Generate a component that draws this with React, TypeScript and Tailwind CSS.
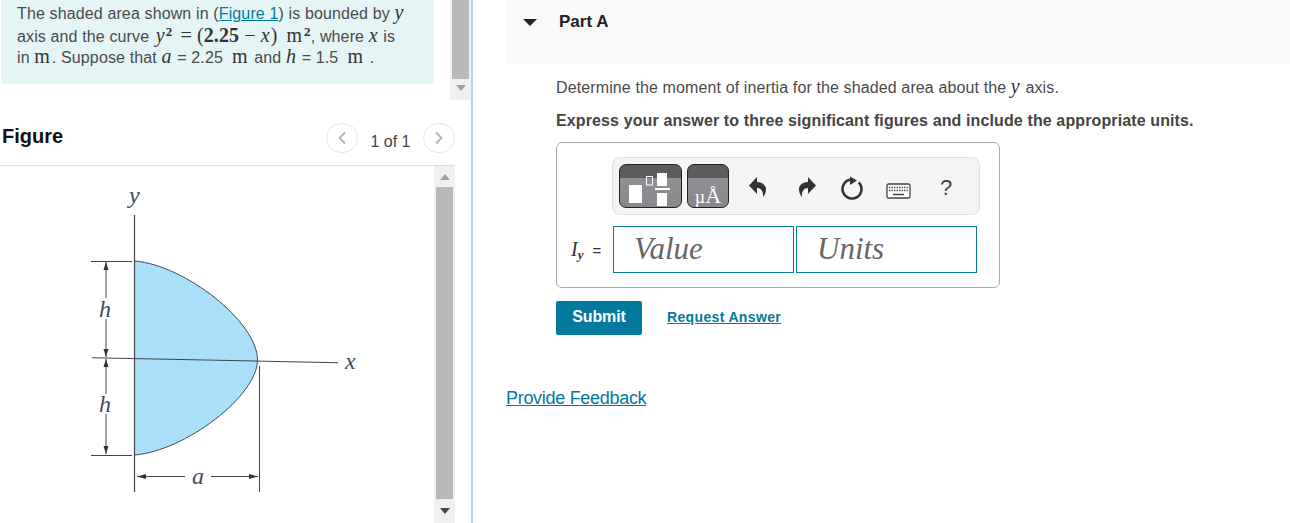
import React from "react";

const M = ({ children, className = "" }: { children: React.ReactNode; className?: string }) => (
  <span className={`font-['Liberation_Serif',serif] italic text-[20px] tracking-[1.2px] text-[#333] ${className}`}>{children}</span>
);
const R = ({ children, className = "" }: { children: React.ReactNode; className?: string }) => (
  <span className={`font-['Liberation_Serif',serif] text-[20px] text-[#333] ${className}`}>{children}</span>
);
const Unit = ({ className = "" }: { className?: string }) => (
  <span className={`font-['Liberation_Serif',serif] text-[20px] tracking-[2px] text-[#333] ${className}`}>m</span>
);
const Sup = ({ children }: { children: React.ReactNode }) => (
  <sup className="static font-['Liberation_Serif',serif] font-bold text-[13px] leading-none align-[6px] text-[#333]">{children}</sup>
);

function Arrow({ down, color }: { down?: boolean; color: string }) {
  return (
    <svg width="10" height="6" viewBox="0 0 10 6" className="block">
      <path d={down ? "M0 0H10L5 6Z" : "M0 6H10L5 0Z"} fill={color} />
    </svg>
  );
}

function Diagram() {
  return (
    <svg width="434" height="343" viewBox="0 180 434 343" className="block">
      <path d="M134.5 261C185 265 257.5 322 257.5 360C257.5 396 185 451 134.5 455Z" fill="#a9dff9" stroke="#3c4a52" strokeWidth="1" />
      <g stroke="#444" strokeWidth="1" fill="none">
        <path d="M134.5 215V492" strokeWidth="1.2" />
        <path d="M92 357.7L338 362.7" strokeWidth="1.1" />
        <path d="M91 261.5H132M91 455.5H132" />
        <path d="M259.5 366V492" />
        <path d="M106 262V298M106 319V357M106 359V394M106 414V454" />
        <path d="M137 476.5H185M211 476.5H258" />
      </g>
      <g fill="#333">
        <path d="M106 262l-2.5 8h5zM106 357l-2.5-8h5zM106 359l-2.5 8h5zM106 454l-2.5-8h5z" />
        <path d="M137 476.5l9-2.5v5zM258 476.5l-9-2.5v5z" />
      </g>
      <g className="font-['Liberation_Serif',serif] italic" fontSize="24" fill="#3d4a60">
        <text x="129" y="203">y</text>
        <text x="99" y="317">h</text>
        <text x="99" y="412">h</text>
        <text x="192" y="484">a</text>
        <text x="345" y="369">x</text>
      </g>
    </svg>
  );
}

function GradBtn({ className, children }: { className: string; children: React.ReactNode }) {
  return (
    <div className={`relative h-[44px] rounded-[7px] border border-[#222] bg-[linear-gradient(#5c5c5c_0,#5c5c5c_32%,#918f94_32%,#8a888d_100%)] overflow-hidden ${className}`}>
      {children}
    </div>
  );
}

export default function App() {
  return (
    <div className="w-[1290px] h-[523px] flex overflow-hidden bg-white font-['Liberation_Sans',Arial,sans-serif] text-[16px] text-[#4a4a4a]">
      <div className="w-[473px] h-full shrink-0 border-r-2 border-[#bcd0e6] flex flex-col">
        <div className="h-[100px] flex shrink-0">
          <div className="w-[434px] h-[84px] ml-px bg-[#e5f5f6] pl-4 pt-[1px] leading-[22px] text-[#4a4a4a] tracking-[0.13px]">
            <div className="h-[23px] whitespace-nowrap">The shaded area shown in (<a className="text-[#007c9c] underline">Figure 1</a>) is bounded by <M>y</M></div>
            <div className="h-[21px] whitespace-nowrap">axis and the curve <M className="ml-[2px]">y</M><Sup>2</Sup><R className="ml-[8px]">=</R><R className="ml-[5px]">(</R><R className="font-bold text-[19px]">2.25</R><R className="ml-[5px]">−</R><M className="ml-[5px]">x</M><R>)</R><Unit className="ml-[9px]" /><Sup>2</Sup>, where <M>x</M> is</div>
            <div className="h-[22px] whitespace-nowrap">in <Unit />. Suppose that <M>a</M> = 2.25 &nbsp;<Unit /> and <M>h</M> = 1.5 &nbsp;<Unit /> .</div>
          </div>
          <div className="ml-[16px] w-[21px] h-full bg-[#f0f0f0] pl-[2px] flex flex-col">
            <div className="w-[17px] h-[79px] bg-[#b9b9b9]" />
            <div className="w-[17px] flex justify-center mt-[6px]"><Arrow down color="#a0a0a0" /></div>
          </div>
        </div>
        <div className="w-[455px] h-[66px] shrink-0 border-b border-[#dddddd] flex items-start pl-[2px] pt-[25px]">
          <div className="text-[20px] font-bold text-[#111] leading-[22px]">Figure</div>
          <div className="ml-auto flex items-center mt-[-2px]">
            <div className="w-[32px] h-[30px] rounded-full border border-[#e6e6e6] flex items-center justify-center">
              <svg width="10" height="14" viewBox="0 0 10 14"><path d="M8 1.5L2.5 7L8 12.5" stroke="#b5b5b5" strokeWidth="2" fill="none" /></svg>
            </div>
            <div className="w-[65px] text-center text-[#444] leading-none mt-[8px]">1 of 1</div>
            <div className="w-[32px] h-[30px] rounded-full border border-[#e6e6e6] flex items-center justify-center">
              <svg width="10" height="14" viewBox="0 0 10 14"><path d="M2 1.5L7.5 7L2 12.5" stroke="#b5b5b5" strokeWidth="2" fill="none" /></svg>
            </div>
          </div>
        </div>
        <div className="flex flex-1 min-h-0 w-[455px]">
          <div className="w-[434px] h-full pt-[14px] overflow-hidden">
            <Diagram />
          </div>
          <div className="w-[21px] h-full bg-[#f0f0f0] pl-[2px] flex flex-col items-start">
            <div className="w-[17px] h-[21px] flex items-center justify-center"><Arrow color="#a0a0a0" /></div>
            <div className="w-[17px] flex-1 bg-[#b9b9b9]" />
            <div className="w-[17px] h-[24px] flex items-center justify-center"><Arrow down color="#444" /></div>
          </div>
        </div>
      </div>

      <div className="flex-1 pl-[33px] min-w-0">
        <div className="h-[64px] bg-[#f9f9f9] flex items-start pl-[17px] pt-[12px]">
          <svg width="14" height="7" viewBox="0 0 14 7" className="mt-[7px]"><path d="M0 0H14L7 7Z" fill="#222" /></svg>
          <div className="ml-[22px] font-bold text-[#222] text-[17px] leading-[20px]">Part A</div>
        </div>
        <div className="pl-[50px]">
          <div className="mt-[12px] leading-[20px] text-[#4a4a4a] h-[20px] whitespace-nowrap tracking-[0.12px]">Determine the moment of inertia for the shaded area about the <M>y</M> axis.</div>
          <div className="mt-[15px] leading-[20px] font-bold text-[#444] whitespace-nowrap tracking-[0.12px]">Express your answer to three significant figures and include the appropriate units.</div>
          <div className="mt-[11px] w-[444px] h-[146px] rounded-[6px] border border-[#aaaaaa]">
            <div className="ml-[55px] mt-[14px] w-[368px] h-[58px] rounded-[8px] border border-[#e0e0e0] bg-[#f4f4f4] flex items-center pl-[6px]">
              <GradBtn className="w-[63px]">
                <svg width="61" height="42" viewBox="0 0 61 42" className="block">
                  <rect x="9" y="20" width="13" height="18" fill="#fff" />
                  <rect x="26.5" y="11.5" width="6" height="8.5" fill="none" stroke="#fff" strokeWidth="1" />
                  <rect x="37" y="8" width="10" height="13" fill="#fff" />
                  <rect x="35" y="23" width="15" height="2" fill="#fff" />
                  <rect x="37" y="28" width="10" height="13" fill="#fff" />
                </svg>
              </GradBtn>
              <GradBtn className="w-[42px] ml-[5px]">
                <div className="absolute left-0 right-0 bottom-[-4px] text-center text-white font-['Liberation_Serif',serif] leading-[26px] whitespace-nowrap">
                  <span className="text-[18px]">µ</span><span className="text-[22px]">Å</span>
                </div>
              </GradBtn>
              <svg width="18" height="20" viewBox="0 0 18 20" className="ml-[20px] mt-[1px]">
                <path d="M0 8.5L8 0V5C14 5 17.5 9 17 13C16.8 16 15.5 18.5 14 20C14.5 14 12 11 8 11V17Z" fill="#333" />
              </svg>
              <svg width="18" height="20" viewBox="0 0 18 20" className="ml-[31px] mt-[1px]">
                <path d="M18 8.5L10 0V5C4 5 .5 9 1 13C1.2 16 2.5 18.5 4 20C3.5 14 6 11 10 11V17Z" fill="#333" />
              </svg>
              <svg width="24" height="24" viewBox="0 0 24 24" className="ml-[24px] mt-[3px]">
                <path d="M18.7 6.3A9.5 9.5 0 1 1 11 3.6" fill="none" stroke="#333" strokeWidth="2.5" />
                <path d="M10 0.5L17 4.5L10 9Z" fill="#333" />
              </svg>
              <svg width="25" height="16" viewBox="0 0 25 16" className="ml-[22px] mt-[9px]">
                <rect x="1" y="1" width="23" height="14" rx="1.5" fill="#fff" stroke="#444" strokeWidth="1.3" />
                <path d="M3 4.5H22M3 7.5H22" stroke="#555" strokeWidth="1.4" strokeDasharray="1.5 1" />
                <path d="M7 11.5H18" stroke="#444" strokeWidth="1.5" />
              </svg>
              <div className="ml-[29px] mt-[3px] text-[22px] leading-none text-[#444]">?</div>
            </div>
            <div className="flex items-center mt-[11px] ml-[14px]">
              <div className="w-[42px] whitespace-nowrap text-[#333] leading-none">
                <span className="font-['Liberation_Serif',serif] italic text-[20px]">I</span>
                <sub className="static font-['Liberation_Serif',serif] italic text-[13px] font-bold leading-none align-[-3px]">y</sub>
                <span className="text-[15px] ml-[9px]">=</span>
              </div>
              <div className="w-[181px] h-[47px] border border-[#037c9f] pl-[20px] font-['Liberation_Serif',serif] italic text-[31px] leading-[44px] text-[#666]">Value</div>
              <div className="w-[181px] h-[47px] ml-[2px] border border-[#037c9f] pl-[20px] font-['Liberation_Serif',serif] italic text-[31px] leading-[44px] text-[#666]">Units</div>
            </div>
          </div>
          <div className="mt-[13px] flex items-center">
            <div className="w-[86px] h-[34px] rounded-[2px] bg-[#03799e] text-white font-bold text-center leading-[32px] tracking-[-0.1px]">Submit</div>
            <a className="ml-[25px] mb-[2px] text-[14px] font-bold text-[#03799e] underline whitespace-nowrap tracking-[0.35px]">Request Answer</a>
          </div>
        </div>
        <a className="block mt-[52px] text-[18px] leading-[22px] text-[#03799e] underline whitespace-nowrap tracking-[-0.3px]">Provide Feedback</a>
      </div>
    </div>
  );
}
